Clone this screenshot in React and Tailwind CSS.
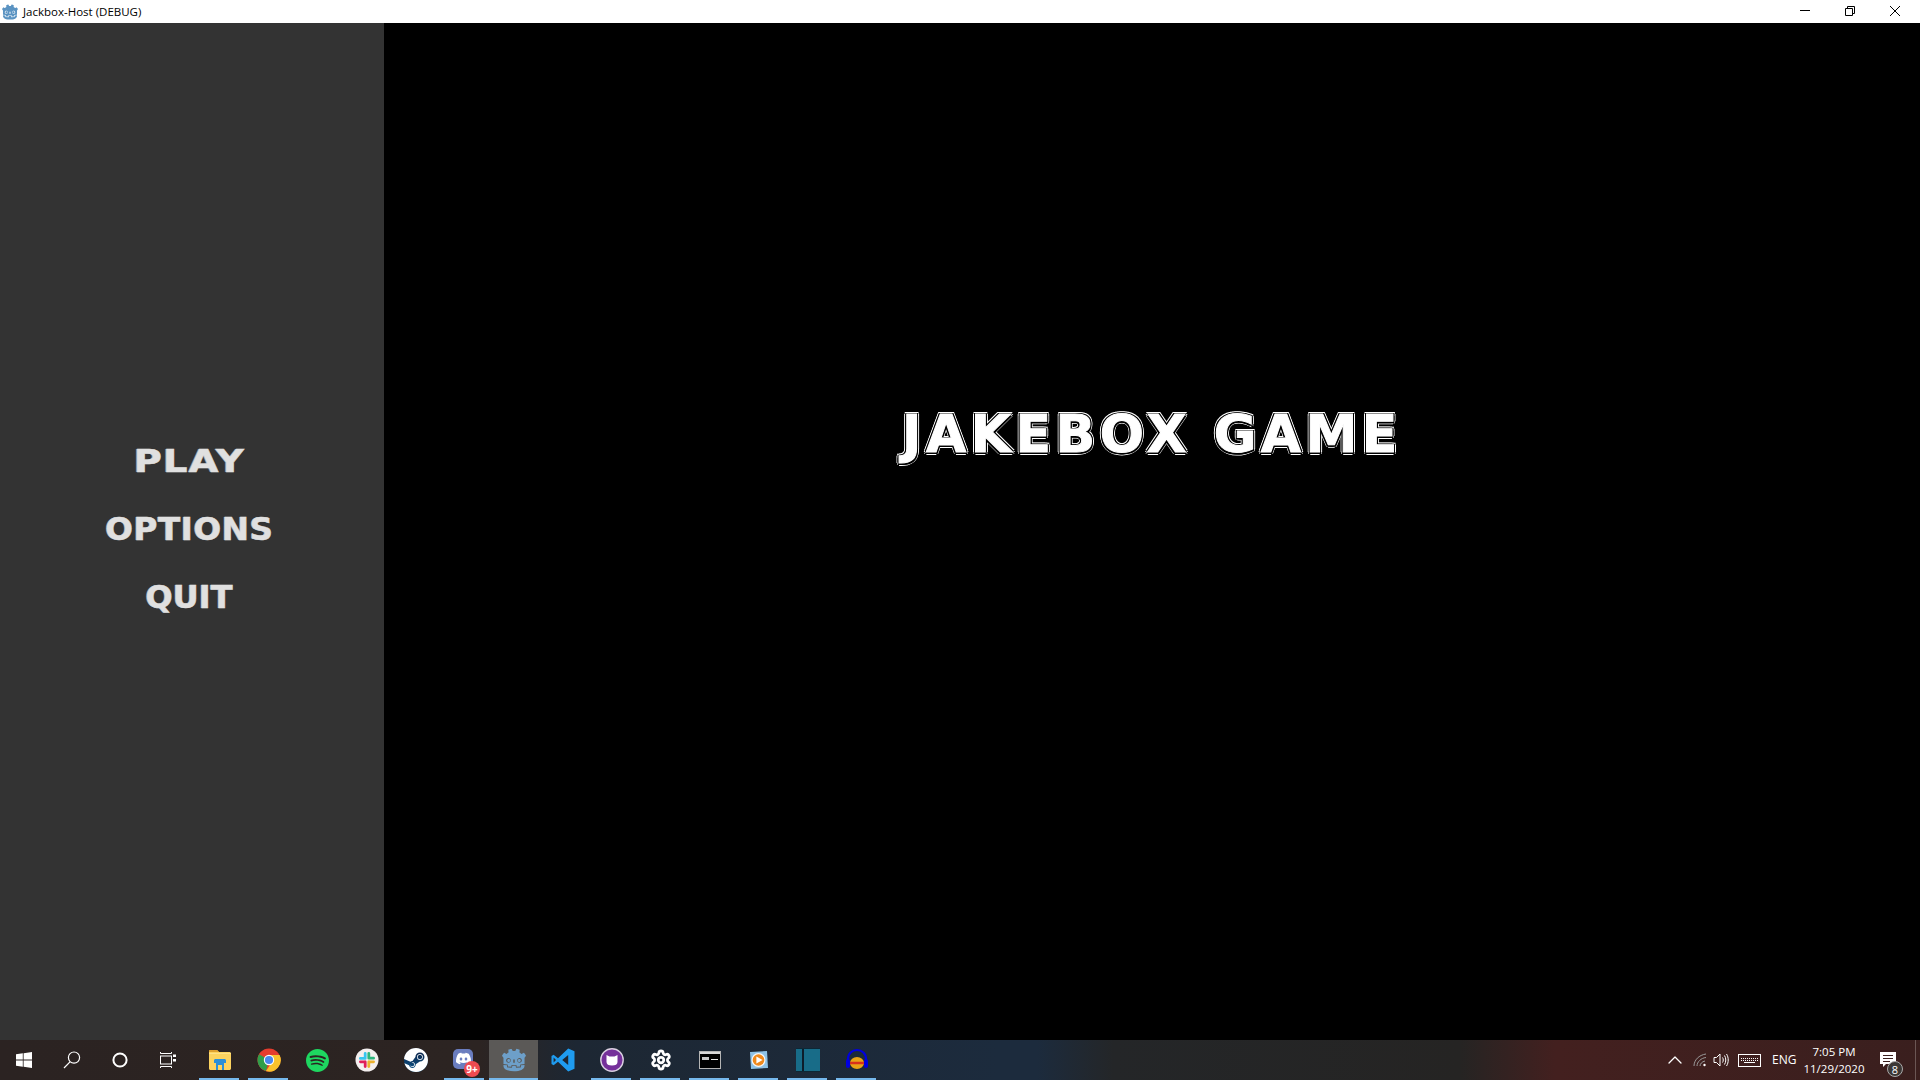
import { Settings, ChevronUp } from 'lucide-react'
import { SiGodotengine, SiSteam, SiDiscord, SiSpotify } from 'react-icons/si'

const menu = [
  { label: 'PLAY', fit: 'scale-x-[1.2] tracking-[1px]' },
  { label: 'OPTIONS', fit: 'scale-x-[1.02] tracking-[0.5px]' },
  { label: 'QUIT', fit: 'scale-x-[1.0] tracking-[0px]' }
]

function GodotIcon({ size = 24 }) {
  return (
    <span className="relative inline-flex items-center justify-center" style={{ width: size, height: size }}>
      <SiGodotengine size={size} color="#6d9fc9" />
    </span>
  )
}

function WinLogo() {
  return (
    <svg width="16" height="16" viewBox="0 0 16 16" fill="#fff">
      <path d="M0 2.3 6.8 1.3V7.6H0ZM7.6 1.2 16 0V7.6H7.6ZM0 8.4H6.8V14.7L0 13.7ZM7.6 8.4H16V16L7.6 14.8Z" />
    </svg>
  )
}

function SearchIcon() {
  return (
    <svg width="18" height="18" viewBox="0 0 18 18" fill="none" stroke="#fff" strokeWidth="1.2">
      <circle cx="11" cy="6.6" r="5.6" />
      <path d="M7 10.8 1 17" />
    </svg>
  )
}

function CortanaIcon() {
  return (
    <svg width="16" height="16" viewBox="0 0 16 16" fill="none" stroke="#fff" strokeWidth="2">
      <circle cx="8" cy="8" r="6.6" />
    </svg>
  )
}

function TaskViewIcon() {
  return (
    <svg width="16" height="16" viewBox="0 0 16 16" fill="none" stroke="#fff" strokeWidth="1">
      <path d="M0.5 0V1.5H11.5V0M0.5 16V14.5H11.5V16" />
      <rect x="0.5" y="4" width="11" height="8" />
      <path d="M13 2.5H16V5H13ZM13 7H16V9.5H13Z" fill="#fff" stroke="none" />
    </svg>
  )
}

function FolderIcon() {
  return (
    <svg width="22" height="20" viewBox="0 0 22 20">
      <path d="M0 1.5C0 .8.5 0 1.5 0H8L10 2H20.5C21.3 2 22 2.7 22 3.5V18.5C22 19.3 21.3 20 20.5 20H1.5C.7 20 0 19.3 0 18.5Z" fill="#fcd35f" />
      <path d="M0 1C0 .5.5 0 1 0H8L10 2H0Z" fill="#e0a22f" />
      <path d="M0 4H22V3.2H0Z" fill="#ffe58f" />
      <path d="M5 13V10.5C5 9.7 5.7 9 6.5 9H15.5C16.3 9 17 9.7 17 10.5V13H15V20H13V15H9V20H7V13Z" fill="#2a8fd8" />
    </svg>
  )
}

function ChromeIcon() {
  return (
    <svg width="24" height="24" viewBox="0 0 24 24">
      <circle cx="12" cy="12" r="11.5" fill="#e53c2e" />
      <path d="M12 12 2.1 6.2A11.5 11.5 0 0 0 9 23.1Z" fill="#2f9e4a" />
      <path d="M12 7H22.6A11.5 11.5 0 0 1 9 23.1L14.6 14.5Z" fill="#f9c22c" />
      <circle cx="12" cy="12" r="5.2" fill="#fff" />
      <circle cx="12" cy="12" r="4.1" fill="#4a88ee" />
    </svg>
  )
}

function SlackIcon() {
  return (
    <svg width="24" height="24" viewBox="0 0 24 24">
      <circle cx="12" cy="12" r="11.5" fill="#f4efef" />
      <g strokeWidth="2.8" strokeLinecap="round" fill="none">
        <path d="M10.2 5.5V10.4M5.4 10.4H10" stroke="#36c5f0" />
        <path d="M13.8 5.5V10.2M18.6 10.2H14" stroke="#2eb67d" />
        <path d="M13.8 18.5V13.8M18.6 13.8H14" stroke="#ecb22e" />
        <path d="M10.2 18.5V13.8M5.4 13.8H10" stroke="#e01e5a" />
      </g>
    </svg>
  )
}

function SteamIcon() {
  return (
    <span className="flex h-6 w-6 items-center justify-center rounded-full bg-[linear-gradient(180deg,#0d1b3d,#0e5a8f)]">
      <SiSteam size={24} color="#fff" />
    </span>
  )
}

function DiscordIcon() {
  return (
    <span className="relative -mt-[3px] ml-[-3px] flex h-[20px] w-[20px] items-center justify-center rounded-[5px] bg-[#6a7dbf]">
      <SiDiscord size={15} color="#fff" />
      <span className="absolute -bottom-[8px] -right-[7px] flex h-[16px] w-[16px] items-center justify-center rounded-full bg-[#ee4b50] font-['Open_Sans',sans-serif] text-[10px] font-bold leading-none text-white">
        9+
      </span>
    </span>
  )
}

function VsCodeIcon() {
  return (
    <svg width="24" height="24" viewBox="0 0 24 24">
      <path d="M17.2 .6 23.5 3.2V20.8L17.2 23.4 7 13.8 2.6 17.2.5 16V8L2.6 6.8 7 10.2ZM17.2 7 11.2 12 17.2 17ZM2.6 9.6V14.4L5 12Z" fill="#1f9cf0" />
    </svg>
  )
}

function MailIcon() {
  return (
    <svg width="24" height="24" viewBox="0 0 24 24">
      <circle cx="12" cy="12" r="11.2" fill="#75309a" stroke="#d9cfe0" strokeWidth="1.4" />
      <path d="M6.5 7 9.5 8.6H14.5L17.5 7V14C17.5 16.5 15.5 17.5 12 17.5S6.5 16.5 6.5 14Z" fill="#fff" />
    </svg>
  )
}

function TerminalIcon() {
  return (
    <span className="flex h-[18px] w-[22px] flex-col border border-[#b5b5b5] bg-black">
      <span className="h-[2px] w-full bg-[#d8d8d8]" />
      <span className="flex items-center gap-[2px] px-[2px] pt-[2px]">
        <span className="h-[3px] w-[8px] bg-[#c8c8c8]" />
        <span className="mt-[3px] h-[1px] w-[7px] bg-[#e8e8e8]" />
      </span>
    </span>
  )
}

function MediaIcon() {
  return (
    <svg width="20" height="20" viewBox="0 0 20 20">
      <path d="M1 2 18 1 19 18 2 19Z" fill="#8ec2e6" />
      <circle cx="9.5" cy="10" r="7" fill="#f7f7f7" />
      <circle cx="9.5" cy="10" r="5.8" fill="#f08a1d" />
      <path d="M7.4 6.4 13.6 10 7.4 13.6Z" fill="#fff" />
    </svg>
  )
}

function BlueBook() {
  return (
    <span className="flex h-[24px] w-[24px] border-y border-[#0d2836]">
      <span className="w-[6px] bg-[#186c88]" />
      <span className="w-[2px] bg-[#0d1d2a]" />
      <span className="flex-1 bg-[#186c88]" />
    </span>
  )
}

function AudacityIcon() {
  return (
    <svg width="24" height="24" viewBox="0 0 24 24">
      <path d="M3 14V11C3 5.5 7 2 12 2S21 5.5 21 11V14" fill="none" stroke="#0000e0" strokeWidth="2.2" />
      <rect x="1" y="11" width="4" height="9" rx="2" fill="#0000e0" />
      <rect x="19" y="11" width="4" height="9" rx="2" fill="#0000e0" />
      <ellipse cx="12" cy="15" rx="7" ry="6" fill="#e8a317" />
      <path d="M5 15H19" stroke="#d8301c" strokeWidth="2.5" />
    </svg>
  )
}

const apps = [
  { id: 'explorer', icon: <FolderIcon />, running: true },
  { id: 'chrome', icon: <ChromeIcon />, running: true },
  { id: 'spotify', icon: <span className="flex h-6 w-6 items-center justify-center"><SiSpotify size={23} color="#1ed760" /></span> },
  { id: 'slack', icon: <SlackIcon /> },
  { id: 'steam', icon: <SteamIcon /> },
  { id: 'discord', icon: <DiscordIcon />, running: true },
  { id: 'godot', icon: <GodotIcon />, active: true },
  { id: 'vscode', icon: <VsCodeIcon /> },
  { id: 'mail', icon: <MailIcon />, running: true },
  { id: 'settings', icon: <Settings size={22} color="#fff" strokeWidth={3} />, running: true },
  { id: 'terminal', icon: <TerminalIcon />, running: true },
  { id: 'media', icon: <MediaIcon />, running: true },
  { id: 'book', icon: <BlueBook />, running: true },
  { id: 'audacity', icon: <AudacityIcon />, running: true }
]

function AppButton({ app }) {
  return (
    <div className={`relative flex h-10 w-[49px] items-center justify-center ${app.active ? 'bg-[#5b5957]' : ''}`}>
      {app.icon}
      {app.active && <span className="absolute bottom-0 left-0 h-[2px] w-full bg-[#76b9ed]" />}
      {app.running && <span className="absolute bottom-0 left-[4px] h-[2px] w-[40px] bg-[#76b9ed]" />}
    </div>
  )
}

function Tray() {
  return (
    <div className="ml-auto flex h-10 items-center text-white">
      <ChevronUp size={24} strokeWidth={1.3} />
      <svg className="ml-[6px]" width="14" height="14" viewBox="0 0 14 14" fill="none" stroke="#9b9b9b" strokeWidth="1">
        <path d="M1 13C1 7 6 2 13 1M4 13C4 9 8 5 13 4.5M7 13C7 11 9 8.5 12 8" />
        <circle cx="11.5" cy="12" r="1.2" fill="#fff" stroke="none" />
      </svg>
      <svg className="ml-[6px]" width="16" height="16" viewBox="0 0 16 16" fill="none" stroke="#fff" strokeWidth="1">
        <path d="M1 5.5H3.5L7 2V14L3.5 10.5H1Z" />
        <path d="M9.5 5.5C10.5 7 10.5 9 9.5 10.5M11.5 3.5C13.2 6 13.2 10 11.5 12.5M13.5 2C15.8 5.5 15.8 10.5 13.5 14" />
      </svg>
      <span className="ml-[9px] flex h-[13px] w-[23px] flex-col items-center justify-center gap-[1px] border border-white">
        <span className="h-[1px] w-[17px] border-t border-dotted border-white" />
        <span className="h-[1px] w-[17px] border-t border-dotted border-white" />
        <span className="h-[1px] w-[11px] border-t border-white" />
      </span>
      <span className="ml-[11px] w-[24px] font-['Open_Sans',sans-serif] text-[12px]">ENG</span>
      <div className="ml-[2px] flex w-[72px] flex-col items-center font-['Open_Sans',sans-serif] text-[11.5px] leading-[17px]">
        <span>7:05 PM</span>
        <span>11/29/2020</span>
      </div>
      <div className="relative ml-[2px] h-10 w-[30px]">
        <svg className="absolute left-[8px] top-[12px]" width="16" height="15" viewBox="0 0 16 15" fill="#fff">
          <path d="M0 0H16V12H6L3 15V12H0ZM3 3V4H13V3ZM3 6V7H13V6ZM3 9V10H10V9Z" fillRule="evenodd" />
        </svg>
        <span className="absolute left-[15px] top-[21px] flex h-[16px] w-[16px] items-center justify-center rounded-full border border-[#aaa] bg-[#3b3735] font-['Open_Sans',sans-serif] text-[11px] leading-none">
          8
        </span>
      </div>
      <span className="ml-[13px] h-10 w-[1px] bg-[#6b5654]" />
      <span className="w-[4px]" />
    </div>
  )
}

export default function App() {
  return (
    <div className="flex h-screen w-full flex-col overflow-hidden bg-black">
      <header className="flex h-[23px] shrink-0 items-center bg-white">
        <span className="ml-[2px] flex w-[21px]">
          <SiGodotengine size={16} color="#5a93c2" />
        </span>
        <span className="font-['Open_Sans',sans-serif] text-[11.5px] text-black">Jackbox-Host (DEBUG)</span>
        <div className="ml-auto mr-[3px] flex h-full pb-[2px]">
          <div className="flex w-[45px] items-center justify-center">
            <span className="h-[1px] w-[10px] bg-black" />
          </div>
          <div className="flex w-[45px] items-center justify-center">
            <svg width="10" height="10" viewBox="0 0 10 10" fill="none" stroke="#000">
              <path d="M.5 2.5H7.5V9.5H.5ZM2.5 2.5V.5H9.5V7.5H7.5" />
            </svg>
          </div>
          <div className="flex w-[45px] items-center justify-center">
            <svg width="10" height="10" viewBox="0 0 10 10" stroke="#000">
              <path d="M0 0 10 10M10 0 0 10" />
            </svg>
          </div>
        </div>
      </header>

      <main className="flex min-h-0 flex-1">
        <aside className="flex w-[384px] shrink-0 flex-col items-center justify-center gap-[31px] bg-[#333333] pb-[4px] pr-[6px]">
          {menu.map(item => (
            <div
              key={item.label}
              className={`font-['DejaVu_Sans',sans-serif] text-[32px] font-bold leading-[37px] text-[#e0e0e0] [-webkit-text-stroke:0.5px_#e0e0e0] [text-shadow:-1px_0_#8f8f8f] ${item.fit}`}
            >
              {item.label}
            </div>
          ))}
        </aside>
        <section className="flex flex-1 items-center justify-center pb-[195px]">
          <h1 className="font-['DejaVu_Sans',sans-serif] text-[52px] font-bold leading-[60px] tracking-[4.5px] text-white [-webkit-text-stroke:1px_#fff] [text-shadow:1.5px_0_#000,-1.5px_0_#000,0_1.5px_#000,0_-1.5px_#000,1.5px_1.5px_#000,-1.5px_-1.5px_#000,1.5px_-1.5px_#000,-1.5px_1.5px_#000,2.5px_0_#fff,-2.5px_0_#fff,0_2.5px_#fff,0_-2.5px_#fff,2px_2px_#fff,-2px_-2px_#fff,2px_-2px_#fff,-2px_2px_#fff]">
            JAKEBOX GAME
          </h1>
        </section>
      </main>

      <footer className="flex h-10 shrink-0 items-center bg-[linear-gradient(90deg,#2b2322_0%,#2c2422_25%,#1d2733_30%,#1c2b3d_52%,#1c2b3d_54%,#242628_58%,#252423_76%,#43201f_81%,#3a1f1e_100%)]">
        <div className="flex h-10 w-[48px] items-center justify-center"><WinLogo /></div>
        <div className="flex h-10 w-[48px] items-center justify-center"><SearchIcon /></div>
        <div className="flex h-10 w-[48px] items-center justify-center"><CortanaIcon /></div>
        <div className="flex h-10 w-[48px] items-center justify-center"><TaskViewIcon /></div>
        <div className="ml-[3px] flex">
          {apps.map(app => <AppButton key={app.id} app={app} />)}
        </div>
        <Tray />
      </footer>
    </div>
  )
}
